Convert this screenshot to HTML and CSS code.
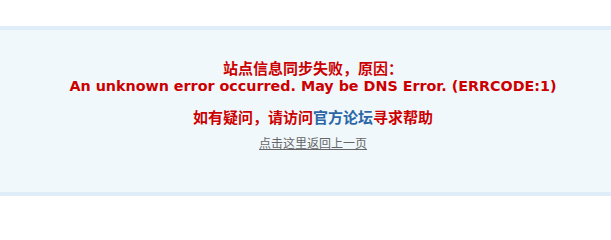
FILE: index.html
```html
<!DOCTYPE html>
<html lang="zh-CN">
<head>
<meta charset="utf-8">
<title>站点信息同步失败</title>
<link rel="stylesheet" href="styles.css">
</head>
<body>
<div class="page">
  <div class="box">
    <div class="msg">
      <p class="err">站点信息同步失败，原因：</p>
      <p class="err-en">An unknown error occurred. May be DNS Error. (ERRCODE:1)</p>
      <p class="help">如有疑问，请访问<a class="forum" href="#">官方论坛</a>寻求帮助</p>
      <p class="back"><a href="#">点击这里返回上一页</a></p>
    </div>
  </div>
</div>
</body>
</html>
```

FILE: styles.css
```css
html, body {
  margin: 0;
  padding: 0;
  background: #ffffff;
}
.page {
  padding-top: 26px;
}
.box {
  border-top: 4px solid #deedf8;
  border-bottom: 4px solid #deedf8;
  background: #f1f8fc;
  height: 162px;
  box-sizing: content-box;
}
.msg {
  padding: 31px 0 0 15px;
  text-align: center;
  font-family: Verdana, "DejaVu Sans", "Noto Sans CJK SC", sans-serif;
}
.msg p {
  margin: 0;
}
.err {
  color: #cc0000;
  font-weight: bold;
  font-size: 15px;
  line-height: 17px;
}
.err-en {
  color: #cc0000;
  font-weight: bold;
  font-size: 14.3px;
  line-height: 17px;
}
.help {
  margin-top: 15px !important;
  color: #cc0000;
  font-weight: bold;
  font-size: 15px;
  line-height: 17px;
}
.forum {
  color: #2b67a6;
  text-decoration: none;
}
.back {
  margin-top: 8px !important;
  font-size: 12px;
  line-height: 16px;
}
.back a {
  color: #666666;
  text-decoration: underline;
  font-family: "Noto Sans CJK SC", sans-serif;
}
```
